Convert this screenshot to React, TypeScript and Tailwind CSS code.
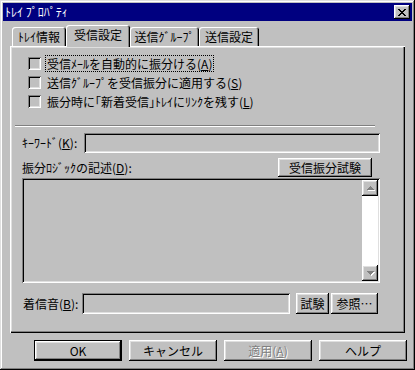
import React from "react";

// Win95 style bevels
const raised =
  "shadow-[inset_-1px_-1px_0_#000,inset_1px_1px_0_#fff,inset_-2px_-2px_0_#808080,inset_2px_2px_0_#dfdfdf]";
const sunken =
  "shadow-[inset_1px_1px_0_#808080,inset_-1px_-1px_0_#fff,inset_2px_2px_0_#000,inset_-2px_-2px_0_#dfdfdf]";

function Key({ k }: { k: string }) {
  return (
    <>
      (<span className="underline underline-offset-[1px]">{k}</span>)
    </>
  );
}

function CloseGlyph() {
  const rows = [
    [0, 1, 6, 7],
    [1, 2, 5, 6],
    [2, 3, 4, 5],
    [3, 4],
    [2, 3, 4, 5],
    [1, 2, 5, 6],
    [0, 1, 6, 7],
  ];
  return (
    <svg width="8" height="7" viewBox="0 0 8 7" shapeRendering="crispEdges">
      {rows.map((cols, y) =>
        cols.map((x) => <rect key={`${x}-${y}`} x={x} y={y} width="1" height="1" fill="#000" />)
      )}
    </svg>
  );
}

function ScrollArrow({ dir }: { dir: "up" | "down" }) {
  const pts = dir === "up" ? "4,1 8,5 0,5" : "0,1 8,1 4,5";
  return (
    <svg width="9" height="7" viewBox="0 0 9 7" shapeRendering="crispEdges">
      <polygon points={pts} fill="#fff" transform="translate(1,1)" />
      <polygon points={pts} fill="#808080" />
    </svg>
  );
}

function Tab({ label, active, className }: { label: React.ReactNode; active?: boolean; className: string }) {
  return (
    <div
      className={
        active
          ? `h-[22px] -mb-[1px] bg-[#c0c0c0] rounded-t-[3px] flex items-center justify-center pb-[2px] shadow-[inset_1px_1px_0_#fff,inset_-1px_0_0_#000,inset_-2px_0_0_#808080] ${className}`
          : `h-[19px] bg-[#c0c0c0] rounded-t-[3px] flex items-center justify-center shadow-[inset_1px_1px_0_#fff,inset_-1px_0_0_#000,inset_-2px_0_0_#808080] ${className}`
      }
    >
      <span className="leading-[14px] whitespace-nowrap">{label}</span>
    </div>
  );
}

function CheckRow({ label, focused }: { label: React.ReactNode; focused?: boolean }) {
  return (
    <div className="h-[13px] flex items-center gap-[5px]">
      <div className={`w-[13px] h-[13px] shrink-0 ${sunken}`} />
      <span
        className={
          focused
            ? "h-[15px] px-[1px] flex items-center leading-[14px] whitespace-nowrap outline-1 outline-dotted outline-black"
            : "h-[15px] px-[1px] flex items-center leading-[14px] whitespace-nowrap"
        }
      >
        {label}
      </span>
    </div>
  );
}

function Button({
  children,
  className,
  isDefault,
  disabled,
}: {
  children: React.ReactNode;
  className: string;
  isDefault?: boolean;
  disabled?: boolean;
}) {
  return (
    <div
      className={`flex items-center justify-center leading-[14px] whitespace-nowrap ${raised} ${
        isDefault ? "border border-black" : ""
      } ${disabled ? "text-[#808080] [text-shadow:1px_1px_0_#fff]" : ""} ${className}`}
    >
      {children}
    </div>
  );
}

export default function App() {
  return (
    <div className="w-[415px] h-[370px] bg-[#c0c0c0] p-[3px] text-[12px] text-black font-['Noto_Sans_CJK_JP','Noto_Sans_CJK_SC',sans-serif] shadow-[inset_-1px_-1px_0_#000,inset_1px_1px_0_#dfdfdf,inset_-2px_-2px_0_#808080,inset_2px_2px_0_#fff] select-none">
      {/* title bar */}
      <div className="h-[18px] bg-[#000080] flex items-center justify-between pl-[2px] pr-[2px]">
        <span className="text-white leading-[14px]">ﾄﾚｲ ﾌﾟﾛﾊﾟﾃｨ</span>
        <div className={`w-[16px] h-[14px] bg-[#c0c0c0] flex items-center justify-center ${raised}`}>
          <CloseGlyph />
        </div>
      </div>

      {/* tabs */}
      <div className="mt-[4px] mx-[7px] h-[21px] flex items-end pl-[2px] relative z-10">
        <Tab label="ﾄﾚｲ情報" className="w-[54px]" />
        <Tab label="受信設定" active className="w-[64px]" />
        <Tab label="送信ｸﾞﾙｰﾌﾟ" className="w-[69px]" />
        <Tab label="送信設定" className="w-[60px]" />
      </div>

      {/* tab page */}
      <div className="mx-[7px] h-[287px] pt-[11px] flex flex-col shadow-[inset_1px_1px_0_#fff,inset_-1px_-1px_0_#000,inset_-2px_-2px_0_#808080,inset_2px_2px_0_#dfdfdf]">
        <div className="pl-[18px] flex flex-col gap-[6px]">
          <CheckRow focused label={<>受信ﾒｰﾙを自動的に振分ける<Key k="A" /></>} />
          <CheckRow label={<>送信ｸﾞﾙｰﾌﾟを受信振分に適用する<Key k="S" /></>} />
          <CheckRow label={<>振分時に｢新着受信｣ﾄﾚｲにﾘﾝｸを残す<Key k="L" /></>} />
        </div>

        <div className="mt-[17px] ml-[5px] w-[360px] h-[2px] border-t border-b border-t-[#808080] border-b-white" />

        <div className="mt-[6px] pl-[12px] h-[20px] flex items-center">
          <span className="w-[62px] leading-[14px] whitespace-nowrap">
            ｷｰﾜｰﾄﾞ<Key k="K" />:
          </span>
          <div className={`w-[296px] h-[20px] ${sunken}`} />
        </div>

        <div className="mt-[5px] ml-[12px] w-[350px] h-[19px] flex items-center justify-between">
          <span className="leading-[14px] whitespace-nowrap">
            振分ﾛｼﾞｯｸの記述<Key k="D" />:
          </span>
          <Button className="w-[94px] h-[19px]">受信振分試験</Button>
        </div>

        <div className={`mt-[1px] ml-[12px] w-[358px] h-[105px] p-[2px] flex justify-end ${sunken}`}>
          <div className="w-[16px] h-full flex flex-col">
            <div className={`h-[16px] flex items-center justify-center ${raised}`}>
              <ScrollArrow dir="up" />
            </div>
            <div className="flex-1 bg-white" />
            <div className={`h-[16px] flex items-center justify-center ${raised}`}>
              <ScrollArrow dir="down" />
            </div>
          </div>
        </div>

        <div className="mt-[10px] pl-[13px] h-[21px] flex items-center">
          <span className="w-[59px] leading-[14px] whitespace-nowrap">
            着信音<Key k="B" />:
          </span>
          <div className={`w-[208px] h-[21px] ${sunken}`} />
          <Button className="ml-[6px] w-[33px] h-[21px]">試験</Button>
          <Button className="ml-[2px] w-[47px] h-[21px]">参照…</Button>
        </div>
      </div>

      {/* dialog buttons */}
      <div className="mt-[7px] ml-[31px] flex gap-[7px]">
        <Button isDefault className="w-[88px] h-[21px]">OK</Button>
        <Button className="w-[88px] h-[21px]">キャンセル</Button>
        <Button disabled className="w-[88px] h-[21px]">
          適用<Key k="A" />
        </Button>
        <Button className="w-[88px] h-[21px]">ヘルプ</Button>
      </div>
    </div>
  );
}
